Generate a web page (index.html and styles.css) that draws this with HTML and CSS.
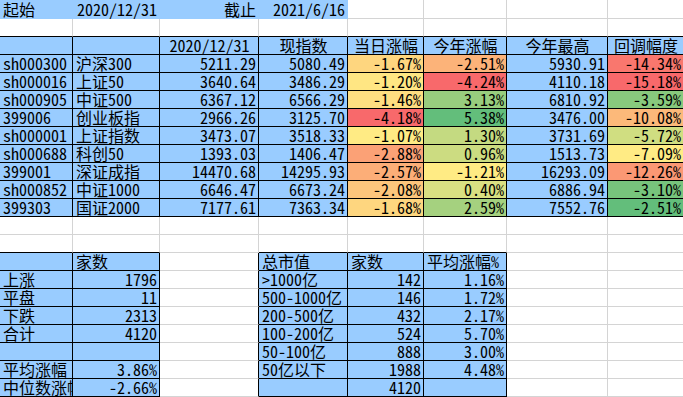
FILE: index.html
```html
<!DOCTYPE html>
<html lang="zh-CN">
<head>
<meta charset="utf-8">
<title>指数涨幅统计</title>
<link rel="stylesheet" href="styles.css">
</head>
<body>
<table class="sheet">
  <colgroup>
    <col class="ca"><col class="cb"><col class="cc"><col class="cd"><col class="ce"><col class="cf"><col class="cg"><col class="ch">
  </colgroup>
  <tbody>
    <tr class="r1">
      <td class="t1">起始</td><td class="t1 num">2020/12/31</td><td class="t1 num">截止</td><td class="t1 num">2021/6/16</td><td></td><td></td><td></td><td></td>
    </tr>
    <tr>
      <td class="kb"></td><td class="kb"></td><td class="kb"></td><td class="kb"></td><td class="kb"></td><td class="kb"></td><td class="kb"></td><td class="kb"></td>
    </tr>
    <tr>
      <td class="k fill"></td><td class="k fill"></td><td class="k fill c">2020/12/31</td><td class="k fill c">现指数</td><td class="k fill c">当日涨幅</td><td class="k fill c">今年涨幅</td><td class="k fill c">今年最高</td><td class="k fill c">回调幅度</td>
    </tr>
    <tr>
      <td class="k fill">sh000300</td><td class="k fill">沪深300</td><td class="k fill num">5211.29</td><td class="k fill num">5080.49</td><td class="k num" style="background:#FED67F">-1.67%</td><td class="k num" style="background:#FCB379">-2.51%</td><td class="k fill num">5930.91</td><td class="k num" style="background:#F9776E">-14.34%</td>
    </tr>
    <tr>
      <td class="k fill">sh000016</td><td class="k fill">上证50</td><td class="k fill num">3640.64</td><td class="k fill num">3486.29</td><td class="k num" style="background:#FFE683">-1.20%</td><td class="k num" style="background:#F8696B">-4.24%</td><td class="k fill num">4110.18</td><td class="k num" style="background:#F8696B">-15.18%</td>
    </tr>
    <tr>
      <td class="k fill">sh000905</td><td class="k fill">中证500</td><td class="k fill num">6367.12</td><td class="k fill num">6566.29</td><td class="k num" style="background:#FEDE81">-1.46%</td><td class="k num" style="background:#98CD7E">3.13%</td><td class="k fill num">6810.92</td><td class="k num" style="background:#88C97D">-3.59%</td>
    </tr>
    <tr>
      <td class="k fill">399006</td><td class="k fill">创业板指</td><td class="k fill num">2966.26</td><td class="k fill num">3125.70</td><td class="k num" style="background:#F8696B">-4.18%</td><td class="k num" style="background:#63BE7B">5.38%</td><td class="k fill num">3476.00</td><td class="k num" style="background:#FCB97A">-10.08%</td>
    </tr>
    <tr>
      <td class="k fill">sh000001</td><td class="k fill">上证指数</td><td class="k fill num">3473.07</td><td class="k fill num">3518.33</td><td class="k num" style="background:#FFEB84">-1.07%</td><td class="k num" style="background:#C4DA81">1.30%</td><td class="k fill num">3731.69</td><td class="k num" style="background:#D0DE81">-5.72%</td>
    </tr>
    <tr>
      <td class="k fill">sh000688</td><td class="k fill">科创50</td><td class="k fill num">1393.03</td><td class="k fill num">1406.47</td><td class="k num" style="background:#FBA176">-2.88%</td><td class="k num" style="background:#CCDC81">0.96%</td><td class="k fill num">1513.73</td><td class="k num" style="background:#FFEB84">-7.09%</td>
    </tr>
    <tr>
      <td class="k fill">399001</td><td class="k fill">深证成指</td><td class="k fill num">14470.68</td><td class="k fill num">14295.93</td><td class="k num" style="background:#FCAE78">-2.57%</td><td class="k num" style="background:#FFEB84">-1.21%</td><td class="k fill num">16293.09</td><td class="k num" style="background:#FB9874">-12.26%</td>
    </tr>
    <tr>
      <td class="k fill">sh000852</td><td class="k fill">中证1000</td><td class="k fill num">6646.47</td><td class="k fill num">6673.24</td><td class="k num" style="background:#FDC67C">-2.08%</td><td class="k num" style="background:#D9E082">0.40%</td><td class="k fill num">6886.94</td><td class="k num" style="background:#77C47C">-3.10%</td>
    </tr>
    <tr>
      <td class="k fill">399303</td><td class="k fill">国证2000</td><td class="k fill num">7177.61</td><td class="k fill num">7363.34</td><td class="k num" style="background:#FED67F">-1.68%</td><td class="k num" style="background:#A5D17F">2.59%</td><td class="k fill num">7552.76</td><td class="k num" style="background:#63BE7B">-2.51%</td>
    </tr>
    <tr>
      <td></td><td></td><td></td><td></td><td></td><td></td><td></td><td></td>
    </tr>
    <tr>
      <td class="kb"></td><td class="kb"></td><td></td><td class="kb"></td><td class="kb"></td><td class="kb"></td><td></td><td></td>
    </tr>
    <tr>
      <td class="k fill"></td><td class="k fill">家数</td><td class="kr"></td><td class="k fill">总市值</td><td class="k fill">家数</td><td class="k fill">平均涨幅%</td><td></td><td></td>
    </tr>
    <tr>
      <td class="k fill">上涨</td><td class="k fill num">1796</td><td class="kr"></td><td class="k fill">&gt;1000亿</td><td class="k fill num">142</td><td class="k fill num">1.16%</td><td></td><td></td>
    </tr>
    <tr>
      <td class="k fill">平盘</td><td class="k fill num">11</td><td class="kr"></td><td class="k fill">500-1000亿</td><td class="k fill num">146</td><td class="k fill num">1.72%</td><td></td><td></td>
    </tr>
    <tr>
      <td class="k fill">下跌</td><td class="k fill num">2313</td><td class="kr"></td><td class="k fill">200-500亿</td><td class="k fill num">432</td><td class="k fill num">2.17%</td><td></td><td></td>
    </tr>
    <tr>
      <td class="k fill">合计</td><td class="k fill num">4120</td><td class="kr"></td><td class="k fill">100-200亿</td><td class="k fill num">524</td><td class="k fill num">5.70%</td><td></td><td></td>
    </tr>
    <tr>
      <td class="k fill"></td><td class="k fill"></td><td class="kr"></td><td class="k fill">50-100亿</td><td class="k fill num">888</td><td class="k fill num">3.00%</td><td></td><td></td>
    </tr>
    <tr>
      <td class="k fill">平均涨幅</td><td class="k fill num">3.86%</td><td class="kr"></td><td class="k fill">50亿以下</td><td class="k fill num">1988</td><td class="k fill num">4.48%</td><td></td><td></td>
    </tr>
    <tr>
      <td class="k fill clip">中位数涨幅</td><td class="k fill num">-2.66%</td><td class="kr"></td><td class="k fill"></td><td class="k fill num">4120</td><td class="k fill"></td><td></td><td></td>
    </tr>
    <tr>
      <td></td><td></td><td></td><td></td><td></td><td></td><td></td><td></td>
    </tr>
  </tbody>
</table>
</body>
</html>
```

FILE: styles.css
```css
html, body {
  margin: 0;
  padding: 0;
  background: #ffffff;
  overflow: hidden;
}

.sheet {
  border-collapse: separate;
  border-spacing: 0;
  table-layout: fixed;
  width: 684px;
  font-family: "Noto Sans Mono CJK SC", "Noto Sans CJK SC", monospace;
  font-size: 16px;
  color: #000;
}

.ca { width: 73px; }
.cb { width: 87px; }
.cc { width: 99px; }
.cd { width: 89px; }
.ce { width: 76px; }
.cf { width: 83px; }
.cg { width: 101px; }
.ch { width: 76px; }

.sheet tr { height: 18px; }
.sheet tr.r1 { height: 19px; }

.sheet td {
  padding: 0 2px 0 3px;
  border: 0;
  border-right: 1px solid #d4d4d4;
  border-bottom: 1px solid #d4d4d4;
  line-height: 17px;
  white-space: nowrap;
  vertical-align: bottom;
  text-align: left;
}

.sheet td.clip { overflow: hidden; }

.sheet td.t1 {
  background: #99ccff;
  border-right-color: #99ccff;
  border-bottom-color: #99ccff;
}

.sheet td.fill { background: #99ccff; }

.sheet td.k {
  border-right-color: #000;
  border-bottom-color: #000;
}

.sheet td.kb { border-bottom-color: #000; }
.sheet td.kr { border-right-color: #000; }

.sheet td.num { text-align: right; }
.sheet td.c { text-align: center; }
```
